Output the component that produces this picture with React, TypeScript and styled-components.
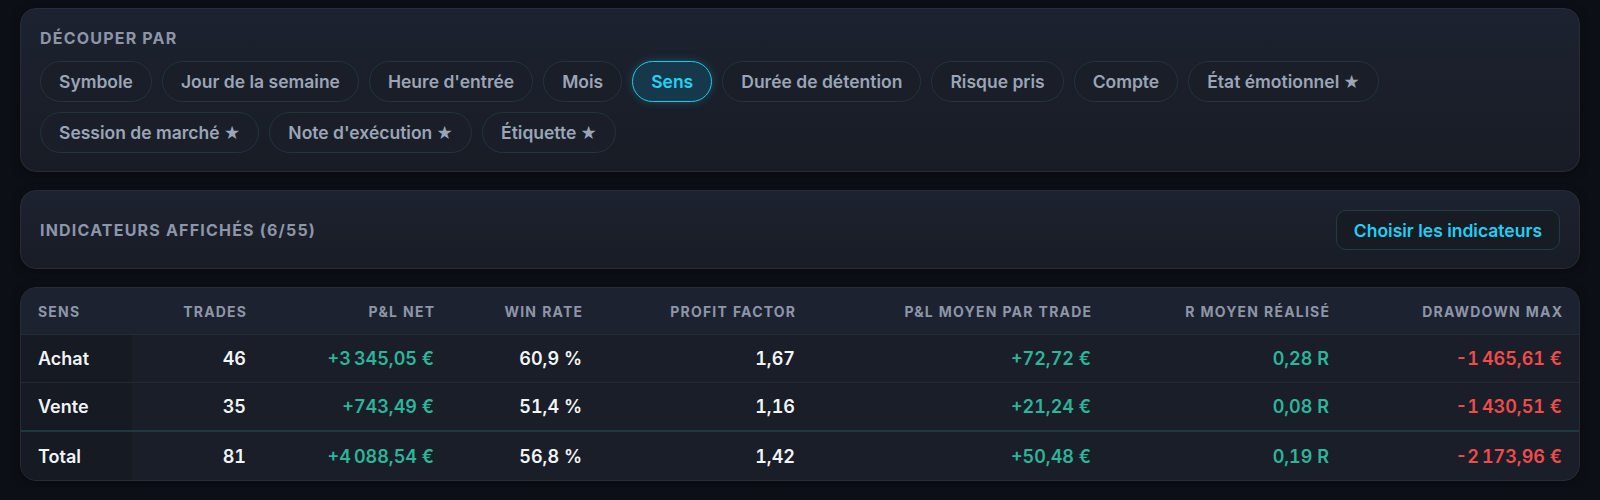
import styled, { createGlobalStyle } from 'styled-components';

const GlobalStyle = createGlobalStyle`
  body {
    margin: 0;
    background: #0c0f15;
    font-family: Inter, "Noto Sans", sans-serif;
    -webkit-font-smoothing: antialiased;
  }
`;

const dimensions = [
  { label: 'Symbole' },
  { label: 'Jour de la semaine' },
  { label: "Heure d'entrée" },
  { label: 'Mois' },
  { label: 'Sens', active: true },
  { label: 'Durée de détention' },
  { label: 'Risque pris' },
  { label: 'Compte' },
  { label: 'État émotionnel', star: true },
  { label: 'Session de marché', star: true },
  { label: "Note d'exécution", star: true },
  { label: 'Étiquette', star: true },
];

type Tone = 'plain' | 'pos' | 'neg';

const columns = [
  { key: 'sens', label: 'Sens', width: 111 },
  { key: 'trades', label: 'Trades', width: 131 },
  { key: 'pnl', label: 'P&L net', width: 188 },
  { key: 'win', label: 'Win rate', width: 148 },
  { key: 'pf', label: 'Profit factor', width: 213 },
  { key: 'avg', label: 'P&L moyen par trade', width: 296 },
  { key: 'r', label: 'R moyen réalisé', width: 238 },
  { key: 'dd', label: 'Drawdown max' },
];

const nb = '\u202f';

const rows: { label: string; cells: { v: string; tone: Tone }[]; total?: boolean }[] = [
  {
    label: 'Achat',
    cells: [
      { v: '46', tone: 'plain' },
      { v: `+3${nb}345,05 €`, tone: 'pos' },
      { v: '60,9 %', tone: 'plain' },
      { v: '1,67', tone: 'plain' },
      { v: '+72,72 €', tone: 'pos' },
      { v: '0,28 R', tone: 'pos' },
      { v: `-1${nb}465,61 €`, tone: 'neg' },
    ],
  },
  {
    label: 'Vente',
    cells: [
      { v: '35', tone: 'plain' },
      { v: '+743,49 €', tone: 'pos' },
      { v: '51,4 %', tone: 'plain' },
      { v: '1,16', tone: 'plain' },
      { v: '+21,24 €', tone: 'pos' },
      { v: '0,08 R', tone: 'pos' },
      { v: `-1${nb}430,51 €`, tone: 'neg' },
    ],
  },
  {
    label: 'Total',
    total: true,
    cells: [
      { v: '81', tone: 'plain' },
      { v: `+4${nb}088,54 €`, tone: 'pos' },
      { v: '56,8 %', tone: 'plain' },
      { v: '1,42', tone: 'plain' },
      { v: '+50,48 €', tone: 'pos' },
      { v: '0,19 R', tone: 'pos' },
      { v: `-2${nb}173,96 €`, tone: 'neg' },
    ],
  },
];

const App = () => {
  return (
    <Page>
      <GlobalStyle />
      <Card>
        <Label>Découper par</Label>
        <Chips>
          {dimensions.map((d) => (
            <Chip key={d.label} $active={d.active}>
              {d.label}
              {d.star && <Star>★</Star>}
            </Chip>
          ))}
        </Chips>
      </Card>

      <Card>
        <Toolbar>
          <Label>Indicateurs affichés (6/55)</Label>
          <GhostButton>Choisir les indicateurs</GhostButton>
        </Toolbar>
      </Card>

      <TableCard>
        <Table>
          <colgroup>
            {columns.map((c) => (
              <col key={c.key} style={c.width ? { width: c.width } : undefined} />
            ))}
          </colgroup>
          <thead>
            <tr>
              {columns.map((c, i) => (
                <Th key={c.key} $left={i === 0}>
                  {c.label}
                </Th>
              ))}
            </tr>
          </thead>
          <tbody>
            {rows.map((r) => (
              <Row key={r.label} $total={r.total}>
                <RowHead>{r.label}</RowHead>
                {r.cells.map((c, i) => (
                  <Td key={i} $tone={c.tone}>
                    {c.v}
                  </Td>
                ))}
              </Row>
            ))}
          </tbody>
        </Table>
      </TableCard>
    </Page>
  );
};

export default App;

const Page = styled.div`
  padding: 8px 20px;
  display: flex;
  flex-direction: column;
  gap: 18px;
`;

const Card = styled.section`
  background: linear-gradient(180deg, #1d2230 0%, #181c25 100%);
  border: 1px solid #262c38;
  border-radius: 16px;
  padding: 19px 19px 18px;
  box-shadow: 0 2px 10px rgba(0, 0, 0, 0.35);
`;

const Label = styled.div`
  font-size: 16px;
  font-weight: 700;
  letter-spacing: 1.2px;
  text-transform: uppercase;
  color: #8d96a8;
  line-height: 20px;
`;

const Chips = styled.div`
  display: flex;
  flex-wrap: wrap;
  gap: 10px;
  margin-top: 13px;
`;

const Chip = styled.button<{ $active?: boolean }>`
  font-family: inherit;
  height: 41px;
  padding: 0 18px;
  border-radius: 21px;
  font-size: 17.5px;
  font-weight: 600;
  display: inline-flex;
  align-items: center;
  gap: 4px;
  cursor: pointer;
  border: 1px solid ${(p) => (p.$active ? '#1ccbee' : '#22343d')};
  background: ${(p) => (p.$active ? '#15394a' : '#191e28')};
  color: ${(p) => (p.$active ? '#22d3f5' : '#9ba5b7')};
  box-shadow: ${(p) => (p.$active ? '0 0 8px rgba(34, 211, 238, 0.25)' : 'none')};
`;

const Star = styled.span`
  font-size: 16px;
`;

const Toolbar = styled.div`
  display: flex;
  align-items: center;
  justify-content: space-between;
`;

const GhostButton = styled.button`
  font-family: inherit;
  height: 40px;
  padding: 0 17px;
  border-radius: 10px;
  border: 1px solid #223b44;
  background: #161b24;
  color: #20cff2;
  font-size: 17.5px;
  font-weight: 600;
  cursor: pointer;
`;

const TableCard = styled.section`
  background: #1a1e28;
  border: 1px solid #262c38;
  border-radius: 16px;
  overflow: hidden;
  box-shadow: 0 2px 10px rgba(0, 0, 0, 0.35);
`;

const Table = styled.table`
  width: 100%;
  border-collapse: collapse;
  table-layout: fixed;
  font-variant-numeric: tabular-nums;
`;

const Th = styled.th<{ $left?: boolean }>`
  height: 46px;
  padding: 0 ${(p) => (p.$left ? '17px' : '15.8px')} 0 17px;
  text-align: ${(p) => (p.$left ? 'left' : 'right')};
  font-size: 14px;
  font-weight: 700;
  letter-spacing: 1.2px;
  text-transform: uppercase;
  color: #8d96a8;
  background: #1d2230;
  border-bottom: 1px solid #252c37;
`;

const Row = styled.tr<{ $total?: boolean }>`
  td {
    height: ${(p) => (p.$total ? '48px' : '47px')};
    border-top: ${(p) => (p.$total ? '2px solid #1e3a40' : '1px solid #232935')};
  }
  &:first-child td {
    border-top: none;
  }
`;

const RowHead = styled.td`
  padding: 0 17px;
  text-align: left;
  font-size: 18px;
  font-weight: 600;
  color: #f2f4f7;
  background: #161a22;
`;

const toneColor: Record<Tone, string> = {
  plain: '#f2f4f7',
  pos: '#2bb59b',
  neg: '#f24b4b',
};

const Td = styled.td<{ $tone: Tone }>`
  padding: 0 17px;
  text-align: right;
  font-size: 18px;
  font-weight: 600;
  color: ${(p) => toneColor[p.$tone]};
`;
